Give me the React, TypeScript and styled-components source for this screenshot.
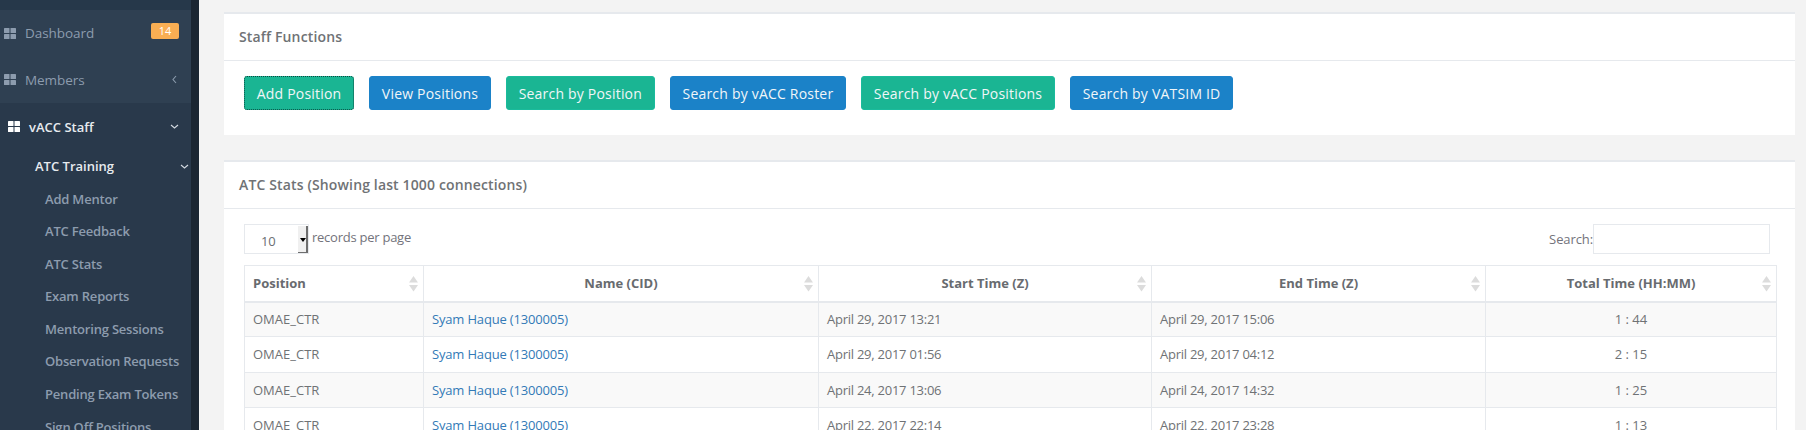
import styled, { createGlobalStyle } from 'styled-components';

const GlobalStyle = createGlobalStyle`
  html, body {
    margin: 0;
    padding: 0;
    height: 430px;
    overflow: hidden;
    background: #f3f3f3;
    font-family: 'Open Sans', sans-serif;
    font-size: 13px;
    color: #73879c;
  }
  * { box-sizing: border-box; }
`;

const GridIcon = ({ light }: { light?: boolean }) => (
  <svg width="12" height="11" viewBox="0 0 12 11" fill={light ? '#fff' : '#8d9cae'}>
    <rect x="0" y="0" width="5.5" height="5" rx="0.6" />
    <rect x="6.5" y="0" width="5.5" height="5" rx="0.6" />
    <rect x="0" y="6" width="5.5" height="5" rx="0.6" />
    <rect x="6.5" y="6" width="5.5" height="5" rx="0.6" />
  </svg>
);

const Chevron = ({ dir }: { dir: 'left' | 'down' }) => (
  <svg width="9" height="9" viewBox="0 0 9 9" fill="none" stroke={dir === 'left' ? '#8d9cae' : '#d5dbe2'} strokeWidth="1.1">
    <path d={dir === 'left' ? 'M6 1 L3 4.5 L6 8' : 'M1 3 L4.5 6 L8 3'} />
  </svg>
);

const SortIcon = () => (
  <SortGlyph width="9" height="16" viewBox="0 0 9 16" fill="#dcdcdc">
    <path d="M4.5 0 L9 6.5 H0 Z" />
    <path d="M0 9 H9 L4.5 15.5 Z" />
  </SortGlyph>
);

const submenu = [
  'Add Mentor',
  'ATC Feedback',
  'ATC Stats',
  'Exam Reports',
  'Mentoring Sessions',
  'Observation Requests',
  'Pending Exam Tokens',
  'Sign Off Positions',
];

const buttons = [
  { label: 'Add Position', color: 'green', focused: true },
  { label: 'View Positions', color: 'blue' },
  { label: 'Search by Position', color: 'green' },
  { label: 'Search by vACC Roster', color: 'blue' },
  { label: 'Search by vACC Positions', color: 'green' },
  { label: 'Search by VATSIM ID', color: 'blue' },
];

const rows = [
  ['April 29, 2017 13:21', 'April 29, 2017 15:06', '1 : 44'],
  ['April 29, 2017 01:56', 'April 29, 2017 04:12', '2 : 15'],
  ['April 24, 2017 13:06', 'April 24, 2017 14:32', '1 : 25'],
  ['April 22, 2017 22:14', 'April 22, 2017 23:28', '1 : 13'],
];

export default function App() {
  return (
    <Page>
      <GlobalStyle />
      <Sidebar>
        <TopStrip />
        <MenuGroup>
          <MenuItem>
            <GridIcon />
            <MenuLabel>Dashboard</MenuLabel>
            <Badge>14</Badge>
          </MenuItem>
          <MenuItem>
            <GridIcon />
            <MenuLabel>Members</MenuLabel>
            <Chevron dir="left" />
          </MenuItem>
        </MenuGroup>
        <ActiveItem>
          <GridIcon light />
          <ActiveLabel>vACC Staff</ActiveLabel>
          <Chevron dir="down" />
        </ActiveItem>
        <SubHeader>
          ATC Training
          <Chevron dir="down" />
        </SubHeader>
        {submenu.map(item => (
          <SubItem key={item}>{item}</SubItem>
        ))}
      </Sidebar>
      <ScrollStrip />
      <Main>
        <Panel>
          <PanelTitle>Staff Functions</PanelTitle>
          <ButtonRow>
            {buttons.map(b => (
              <ActionButton key={b.label} $color={b.color} $focused={b.focused}>
                {b.label}
              </ActionButton>
            ))}
          </ButtonRow>
        </Panel>
        <StatsPanel>
          <PanelTitle>ATC Stats (Showing last 1000 connections)</PanelTitle>
          <PanelBody>
            <TableControls>
              <LengthControl>
                <FakeSelect>
                  10
                  <SelectArrow />
                </FakeSelect>
                <span>records per page</span>
              </LengthControl>
              <SearchControl>
                Search:
                <SearchInput />
              </SearchControl>
            </TableControls>
            <StatsTable>
              <colgroup>
                <col style={{ width: 179 }} />
                <col style={{ width: 395 }} />
                <col style={{ width: 333 }} />
                <col style={{ width: 334 }} />
                <col style={{ width: 291 }} />
              </colgroup>
              <thead>
                <tr>
                  <HeadCell $left>Position<SortIcon /></HeadCell>
                  <HeadCell>Name (CID)<SortIcon /></HeadCell>
                  <HeadCell>Start Time (Z)<SortIcon /></HeadCell>
                  <HeadCell>End Time (Z)<SortIcon /></HeadCell>
                  <HeadCell>Total Time (HH:MM)<SortIcon /></HeadCell>
                </tr>
              </thead>
              <tbody>
                {rows.map((r, idx) => (
                  <BodyRow key={idx} $odd={idx % 2 === 0}>
                    <Cell>OMAE_CTR</Cell>
                    <Cell><NameLink>Syam Haque (1300005)</NameLink></Cell>
                    <DateCell>{r[0]}</DateCell>
                    <DateCell>{r[1]}</DateCell>
                    <CenterCell>{r[2]}</CenterCell>
                  </BodyRow>
                ))}
              </tbody>
            </StatsTable>
          </PanelBody>
        </StatsPanel>
      </Main>
    </Page>
  );
}

const Page = styled.div`
  display: flex;
  width: 1806px;
  height: 430px;
  overflow: hidden;
`;

const Sidebar = styled.nav`
  flex: 0 0 191px;
  height: 430px;
  overflow: hidden;
  background: #29394b;
`;

const TopStrip = styled.div`
  height: 10px;
  background: #26384a;
`;

const ScrollStrip = styled.div`
  flex: 0 0 8px;
  background: #1b2632;
`;

const MenuGroup = styled.div`
  background: #2f4052;
  height: 93px;
`;

const MenuItem = styled.div`
  display: flex;
  align-items: center;
  height: 46.5px;
  padding: 0 12px 0 4px;
  color: #8d9cae;
  font-size: 13.5px;
`;

const MenuLabel = styled.span`
  flex: 1;
  margin-left: 9px;
  letter-spacing: -0.05px;
`;

const Badge = styled.span`
  display: inline-block;
  width: 28px;
  height: 16px;
  margin-top: -4px;
  border-radius: 2px;
  background: #f9ae53;
  color: #fff;
  font-size: 11px;
  line-height: 16px;
  text-align: center;
`;

const ActiveItem = styled.div`
  display: flex;
  align-items: center;
  height: 47px;
  padding: 0 12px 0 8px;
  color: #fff;
  font-size: 13px;
  font-weight: 600;
`;

const ActiveLabel = styled.span`
  flex: 1;
  margin-left: 9px;
  color: #e7ebef;
`;

const SubHeader = styled.div`
  display: flex;
  align-items: center;
  justify-content: space-between;
  height: 32.5px;
  padding: 0 2px 0 35px;
  color: #e7ebef;
  font-size: 13px;
  font-weight: 600;
`;

const SubItem = styled.div`
  height: 32.6px;
  padding-left: 45px;
  color: #8d9cae;
  font-size: 13px;
  font-weight: 600;
  letter-spacing: -0.2px;
  line-height: 33px;
  white-space: nowrap;
`;

const Main = styled.main`
  flex: 1;
  padding: 12px 11px 0 25px;
  min-width: 0;
`;

const Panel = styled.section`
  height: 123px;
  background: #fff;
  border-top: 2px solid #e6e9ed;
`;

const StatsPanel = styled(Panel)`
  height: auto;
  margin-top: 25px;
`;

const PanelTitle = styled.h2`
  height: 47px;
  margin: 0;
  padding: 0 15px;
  border-bottom: 1px solid #e6e9ed;
  color: #6f7275;
  font-size: 14px;
  font-weight: 600;
  letter-spacing: 0.14px;
  line-height: 45px;
`;

const ButtonRow = styled.div`
  display: flex;
  gap: 15px;
  padding: 15px 20px 0;
`;

const ActionButton = styled.button<{ $color: string; $focused?: boolean }>`
  height: 34px;
  padding: 0 11.75px;
  border: 1px solid ${p => (p.$color === 'green' ? '#1abb9c' : '#1b82c8')};
  border-radius: 3px;
  background: ${p => (p.$color === 'green' ? '#1ab593' : '#1b82c8')};
  color: #f1f6f8;
  font-family: inherit;
  font-size: 14px;
  letter-spacing: 0.2px;
  outline: ${p => (p.$focused ? '1px dotted #0b4a3d' : 'none')};
  outline-offset: -1px;
  white-space: nowrap;
`;

const PanelBody = styled.div`
  padding: 15px 19px 0 20px;
`;

const TableControls = styled.div`
  display: flex;
  justify-content: space-between;
  height: 41px;
`;

const LengthControl = styled.div`
  display: flex;
  align-items: flex-start;
  gap: 3px;
  color: #73737b;
  font-size: 13px;
  letter-spacing: -0.25px;
  line-height: 27px;
`;

const FakeSelect = styled.div`
  position: relative;
  width: 65px;
  height: 30px;
  border: 1px solid #e6e9ed;
  padding-left: 16px;
  color: #6b6f73;
  font-size: 13px;
  line-height: 32px;
`;

const SelectArrow = styled.span`
  position: absolute;
  top: 1px;
  right: 0;
  width: 10px;
  height: 27px;
  background: #f0f0f0;
  border-right: 2px solid #6e6e6e;
  border-bottom: 1px solid #6e6e6e;

  &::after {
    content: '';
    position: absolute;
    top: 12px;
    left: 2px;
    border: 3px solid transparent;
    border-top: 4px solid #000;
    border-bottom: 0;
  }
`;

const SearchControl = styled.label`
  display: flex;
  align-items: flex-start;
  color: #73737b;
  font-size: 13px;
  letter-spacing: -0.1px;
  line-height: 30px;
  padding-right: 6px;
`;

const SearchInput = styled.div`
  width: 177px;
  height: 30px;
  border: 1px solid #e6e9ed;
  background: #fff;
`;

const StatsTable = styled.table`
  width: 1532px;
  table-layout: fixed;
  border-collapse: collapse;
  border: 1px solid #e6e9ed;
  font-size: 13px;
  color: #6f7275;
`;

const HeadCell = styled.th<{ $left?: boolean }>`
  position: relative;
  height: 36px;
  padding: 0 8px;
  border: 1px solid #e6e9ed;
  border-bottom-width: 2px;
  color: #686b6f;
  font-size: 13px;
  font-weight: 700;
  text-align: ${p => (p.$left ? 'left' : 'center')};
`;

const SortGlyph = styled.svg`
  position: absolute;
  top: 10px;
  right: 5px;
`;

const BodyRow = styled.tr<{ $odd: boolean }>`
  background: ${p => (p.$odd ? '#f9f9f9' : '#fff')};
`;

const Cell = styled.td`
  height: 35.3px;
  padding: 0 8px;
  border: 1px solid #e6e9ed;
  white-space: nowrap;
`;

const DateCell = styled(Cell)`
  letter-spacing: -0.25px;
`;

const CenterCell = styled(Cell)`
  text-align: center;
`;

const NameLink = styled.a`
  color: #337ab7;
  letter-spacing: -0.17px;
`;
